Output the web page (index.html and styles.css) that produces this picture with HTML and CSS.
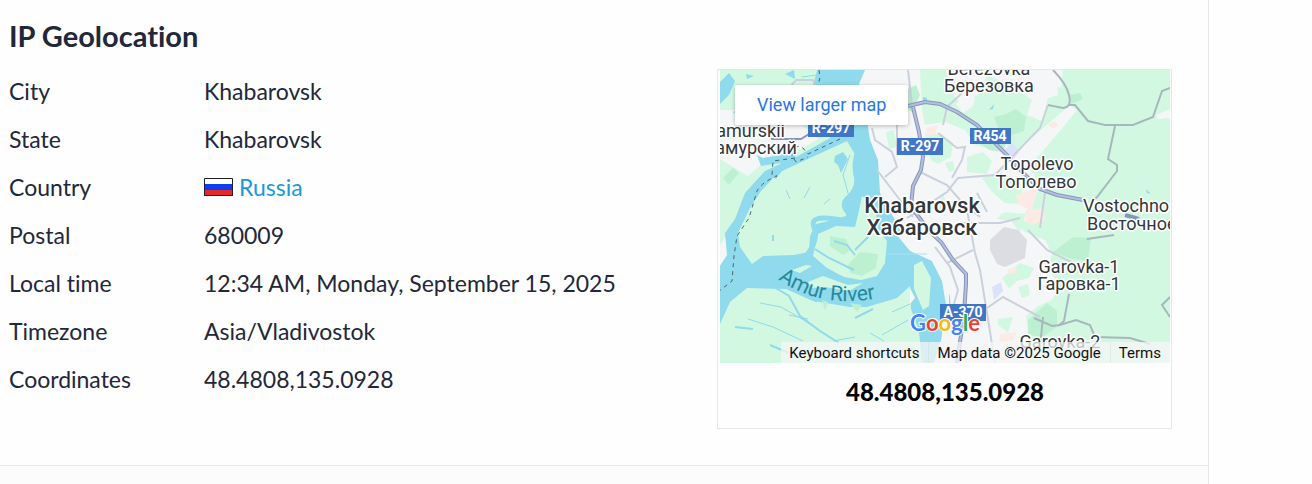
FILE: index.html
```html
<!DOCTYPE html>
<html lang="en">
<head>
<meta charset="utf-8">
<meta name="viewport" content="width=device-width, initial-scale=1">
<title>IP Geolocation</title>
<link rel="stylesheet" href="styles.css">
</head>
<body>
<div class="page">
<main class="content">
<section class="geo">
<h2 class="geo-title">IP Geolocation</h2>
<div class="geo-body">
<table class="facts">
<tbody>
<tr><th scope="row">City</th><td>Khabarovsk</td></tr>
<tr><th scope="row">State</th><td>Khabarovsk</td></tr>
<tr><th scope="row">Country</th><td><span class="country"><svg class="flag" viewBox="0 0 29 18" aria-hidden="true"><path fill="#fff" d="M0 0h29v6H0z"/><path fill="#0b3df2" d="M0 6h29v6H0z"/><path fill="#e6282c" d="M0 12h29v6H0z"/><path fill="none" stroke="#20202e" d="M.5.5h28v17H.5z"/></svg><a href="#russia">Russia</a></span></td></tr>
<tr><th scope="row">Postal</th><td>680009</td></tr>
<tr><th scope="row">Local time</th><td>12:34 AM, Monday, September 15, 2025</td></tr>
<tr><th scope="row">Timezone</th><td>Asia/Vladivostok</td></tr>
<tr><th scope="row">Coordinates</th><td>48.4808,135.0928</td></tr>
</tbody>
</table>
<div class="map-card">
<div class="map">
<svg class="map-canvas" viewBox="720 70 450 293" role="img" aria-label="Map of Khabarovsk">
<rect x="720" y="70" width="450" height="293" fill="#f5f6f8"/>
<!-- parks and countryside -->
<g fill="#d3f8e2">
<path d="M720 70H850V130L857 160V240L885 265 910 275 935 310 928 363H720z"/>
<path d="M920 70H946L950 92 965 107 975 96 983 92 986 75 1010 84 1032 100 1027 115 1042 121 1048 98 1058 95 1056 70H1170V363H1030L1026 350 1028 330 1026 316 1038 306 1052 300 1060 285 1048 270 1052 254 1045 240 1025 232 1015 222 1016 208 1040 190 1034 174 1028 168 1060 131 1077 110 1070 105 1012 155 1005 140 994 150 975 145 965 130 945 122 925 125 922 110z"/>
<path d="M967 157l16-5 9 9-5 13-20-2zM982 178l12-4 16 4 13 12-4 14-14-1-14-12zM886 132l8-2 3 17-8 2zM925 133l18 2 10 8-2 14-13 7-6-3-6-12zM945 163l8-2 2 9-6 2zM1001 214l13-5 10 5-4 19-9-12-14-2zM934 207l9-12 5 9-8 9z"/>
<path d="M1002 278l18-15 14 5-5 10-12 3-8 8zM1018 287l10-3 2 11-8 3zM998 319l15-2-5 16-10-8z"/>
</g>
<g fill="#bdf0d1">
<path d="M994 117l12-3 10-5 10 8-2 14-17 6-8-7zM1053 252l20-15 18 1-3 23-16-2zM1028 320l19-17 10 8v16l-17 12-12-6zM1070 95l10-2 3 6-12 5zM902 92l14-7 4 10-8 17-10-6zM975 139l14-4 17 9-3 8-14-2zM723 178l10-10 6 5-10 12z"/>
</g>
<path fill="#f5f6f8" d="M720 110h42l18 10 22 5 16 14-18 11-28 5-24 21-28-17zM720 245l15-23-4 25-8 20h-3zM795 100l17-12 14 2 3 30-20 3zM1156 115l14-6v9l-12 1zM956 104l10-10 9 3-2 9-10 7zM1048 83l5-18 10 6-2 17zM996 208l24-4 8 5-2 5-24-2z"/>
<path fill="#fbebe4" d="M1016 195l22-7-6 22-13-5zM1048 124l8-3 2 5-7 3zM1026 210l18-2 1 12-13 5-8-5zM1008 269l9-2-2 6-7 1zM1000 334l17-2-4 8-13 2zM926 128l12-3-2 9-9 2z"/>
<path fill="#dbe2fb" d="M1002 151l11-8 6 9-9 11zM992 287l9-5 2 9-9 9z"/>
<path fill="#dcdde2" d="M990 240l14-13 14 3 9 10-2 18-20 9-8-3-7-14z"/>
<!-- Amur river -->
<path fill="#8fdaec" d="M832 70h33l-6 14 5 16 6 40 8 20 2 33 15 27 8 16 24 16 14 25 9 19 1 23-11 24-6 20h-12l-3-32-8-22-1-23-13 12-30 9h-17l-37-6-27-12-39-1-17 14-16 35V275l13-20-2-22 10-14 10-26 20-22 33-15 32-18-7-20-12-25 7-26z"/>
<g fill="#d3f8e2">
<path d="M847 141l9 15-1 27-9 18v15l-9 3-21 5-6 12-1 16-15 3-31 1-11 8-12-17-2-14 12-25 11-17 17-18 30-14z"/>
<path d="M813 256l5-22 18-8 19 1 3-12 4-19 13 10 3 23 9 12-2 22-8 13-16 4-17-3-17-9z"/>
<path d="M914 265l8-4 9 17-2 28-6 4-9-21zM792 270l14-5 6 1-12 7zM808 282l15-6 25 9 15-2-14 8-24-4-14 1z"/>
</g>
<path fill="#f5f6f8" d="M910 288l5 10-5 6z"/>
<g fill="#bdf0d1"><path d="M830 236l16 3 5 11-8 5-13-9zM848 265l12-13 18 2-2 14-14 8-12-3zM822 300l6 2-3 9zM850 303l12 2-5 7z"/></g>
<g fill="#8fdaec">
<path d="M835 156l8-4 5 7-4 8-3 6-3-8-4-3zM720 82l9-9 6 8-6 14-9 9zM733 112l10-4 6 4-9 5zM785 74l9-4 1 9zM746 74l8 2-7 3zM757 155l6 3 35-6-5 9-17 8 5-6-20 3zM769 174l13-3-6 8zM989 110l5-6-1 5zM1146 189l5 5-4-1zM923 97l4 1v4l-4-1z"/>
</g>
<g fill="none" stroke="#8fdaec">
<path stroke-width="5" d="M860 145q-7 16-4 30t-7 22 1 17-15 5-21 8-7 28"/>
<path stroke-width="2" d="M774 287l15 9 11 20 20 15 19 12M855 318l18-9M886 355l28-7M770 345l19 8M735 327l18 2M834 241l13 4 8 10M815 249l14 9 25 12M855 250l14-14M773 235v6"/>
<path d="M760 303l21 4 21 12 26 17M748 319l25 8 30 14M833 341l22-4M882 335l26-15M789 315l19 4M804 296l13 6M786 190l4 9M810 187l-6 11M830 199l-6 5M850 155l-7 20 7 25M753 91l10 2M802 77l15-2M870 333l14 8M892 312l18-8"/>
</g>
<path fill="#f5f6f8" d="M896 234l18 1 13 8 17 26 5 12v82h-15l7-22 5-36-4-24-10-20-22-10z"/>
<path stroke="#a9e2ef" fill="none" d="M887 254h40"/>
<!-- minor roads -->
<g fill="none" stroke="#cbd1dc" stroke-width="2">
<path d="M789 88l7-8h17l3 9M908 70l4 34M872 128l3 12 17 12 5 15-12 10M877 170l36 47M920 172l27 13 13 15 20 17M907 218l40-26 11-14 37-3 17-18 28-29 8-23M938 133l19 15 8-1-3 13-10 18M962 93l-15 14-4 18M897 125v30M977 193l10 19M967 210l8 43 5 17 7 43 8 50M947 263l26-13M935 247l15 20 8 23-5 17M987 308l16-11 37 20M963 223h37l20-5M1045 193l-5 35M1028 230l19 20 26 13"/>
</g>
<g fill="none" stroke="#a7b7be" stroke-width="2">
<path d="M1053 70q13 13 16 25t-6 13l-15-3M1069 105h6l13 16 17 4h28l20-8 9-26 8-3M1115 126l-7 33 9 6v6l-20 26-6 6M1069 294l-5 27-6 5M1034 318l18 8 8-1 16-5 14 5 5 12 35 1 20 6M1170 297l-8 8 8 12M1043 317l-3 30M1087 239l27-4"/>
</g>
<!-- highways -->
<g fill="none" stroke="#8795bd" stroke-width="4">
<path d="M908 106l17-4 15 2 17 8 20 13 30 30 16 18 17 16 17 6 26 5"/>
<path d="M913 107l6 25 4 25-2 13-8 16-2 20M912 208l18 24 11 10 12 18 13 14v10l-2 30-7 49"/>
<path d="M1125 215l14 4"/>
</g>
<g fill="none" stroke="#b4bfdc" stroke-width="2">
<path d="M908 106l17-4 15 2 17 8 20 13 30 30 16 18 17 16 17 6 26 5M913 107l6 25 4 25-2 13-8 16-2 20M912 208l18 24 11 10 12 18 13 14v10l-2 30-7 49"/>
<path stroke="#8795bd" d="M771 139l30 0 8-5"/>
</g>
<path fill="none" stroke="#4d6570" stroke-dasharray="4 4" d="M819 70l1 8-3 10M840 139l-32 15-6-7q-8-3-10 9l4 6 12-5M795 158l-22 3-1 14 5 1q-15 6-20 15l-8 27-12 18-3 20-2 25-14 11"/>
<!-- road shields -->
<g class="shield">
<path fill="#3f76c7" d="M808 120h46v17h-46zM897 138h46v17h-46zM970 128h41v16h-41zM940 304h46v17h-46z"/>
<text x="831" y="133">R-297</text><text x="920" y="151">R-297</text><text x="990" y="141">R454</text><text x="963" y="317">A-370</text>
</g>
<!-- place names -->
<g class="place">
<text x="989" y="75">Berezovka</text><text x="989" y="92">Березовка</text>
<text x="1037" y="170">Topolevo</text><text x="1036" y="188">Тополево</text>
<text x="1079" y="273">Garovka-1</text><text x="1079" y="290">Гаровка-1</text>
<text x="1060" y="348">Garovka-2</text>
<text class="from-left" x="1083" y="212">Vostochno</text><text class="from-left" x="1087" y="230">Восточное</text>
<text class="to-right" x="785" y="137">Priamurskii</text><text class="to-right" x="797" y="154">Приамурский</text>
</g>
<g class="place place-city"><text x="922" y="213">Khabarovsk</text><text x="922" y="235">Хабаровск</text></g>
<path id="river-line" fill="none" d="M778 279Q826 313 890 295"/>
<text class="river-name"><textPath href="#river-line">Amur River</textPath></text>
<text class="brand" x="945" y="331"><tspan fill="#4285f4">G</tspan><tspan fill="#e94235">o</tspan><tspan fill="#fabb05">o</tspan><tspan fill="#4285f4">g</tspan><tspan fill="#34a853">l</tspan><tspan fill="#e94235">e</tspan></text>
</svg>
<a class="map-open" href="#map">View larger map</a>
<div class="map-legal">
<button type="button">Keyboard shortcuts</button>
<span>Map data ©2025 Google</span>
<a href="#terms">Terms</a>
</div>
</div>
<p class="map-caption">48.4808,135.0928</p>
</div>
</div>
</section>
</main>
</div>
</body>
</html>
```
FILE: styles.css
```css
* { box-sizing: border-box; }

body {
  margin: 0;
  background: #fefefe;
  color: #22273a;
  font-family: Lato, "Open Sans", sans-serif;
  font-size: 23px;
  font-variant-ligatures: none;
  line-height: 32px;
}

.page {
  display: grid;
  grid-template-columns: minmax(0, 1fr) 103px;
  min-height: 100vh;
}

.content {
  border-right: 1px solid #e6e7e9;
  background: #fcfcfc;
}

.geo {
  padding: 16px 36px 36px 9px;
  border-bottom: 1px solid #e6e7e9;
  background: #fefefe;
}

.geo-title {
  margin: 0 0 13px;
  font-size: 29px;
  font-weight: 700;
  line-height: 40px;
}

.geo-body {
  display: flex;
  align-items: flex-start;
  justify-content: space-between;
  gap: 32px;
}

.facts { border-collapse: collapse; }

.facts th,
.facts td {
  padding: 6px 0 10px;
  text-align: left;
  font-weight: 400;
}

.facts th { width: 195px; }

.facts a {
  color: #1a98da;
  text-decoration: none;
}

.country {
  display: flex;
  align-items: center;
  gap: 6px;
}

.flag { width: 29px; height: 18px; }

.map-card {
  flex: 0 1 455px;
  padding: 0 1px 0 2px;
  border: 1px solid #e6e7e9;
}

.map {
  position: relative;
  overflow: hidden;
  font-family: Roboto, sans-serif;
}

.map-canvas {
  display: block;
  width: 100%;
  height: auto;
}

.map-open {
  position: absolute;
  top: 15px;
  left: 15px;
  padding: 0 22px;
  border-radius: 2px;
  background: #fff;
  box-shadow: 0 1px 4px rgba(0, 0, 0, 0.25);
  color: #2a76e0;
  font-size: 18px;
  line-height: 40px;
  text-decoration: none;
}

.map-legal {
  position: absolute;
  right: 0;
  bottom: 0;
  display: flex;
  color: #111;
  font-size: 15px;
  line-height: 20px;
}

.map-legal > * {
  padding: 1px 9px 0 8px;
  border: 0;
  background: rgba(245, 245, 245, 0.75);
  color: inherit;
  font: inherit;
  text-decoration: none;
  white-space: nowrap;
}

.map-legal > * + * { border-left: 1px solid rgba(200, 215, 222, 0.4); }

.map-caption {
  margin: 13px 0 20px;
  color: #000;
  font-size: 24px;
  font-weight: 900;
  text-align: center;
}

.place {
  fill: #33373b;
  stroke: #fff;
  stroke-width: 3px;
  stroke-linejoin: round;
  paint-order: stroke;
  font-size: 18px;
  text-anchor: middle;
}

.place-city {
  font-size: 22px;
  font-weight: 500;
}

.from-left { text-anchor: start; }
.to-right { text-anchor: end; }

.shield {
  font-size: 14px;
  font-weight: 700;
  text-anchor: middle;
}

.shield text { fill: #fff; }

.river-name {
  fill: #25899c;
  font-size: 21px;
}

.brand {
  font-family: Lato, sans-serif;
  font-size: 22px;
  font-weight: 700;
  stroke: #fff;
  stroke-width: 2px;
  paint-order: stroke;
  text-anchor: middle;
}
```
